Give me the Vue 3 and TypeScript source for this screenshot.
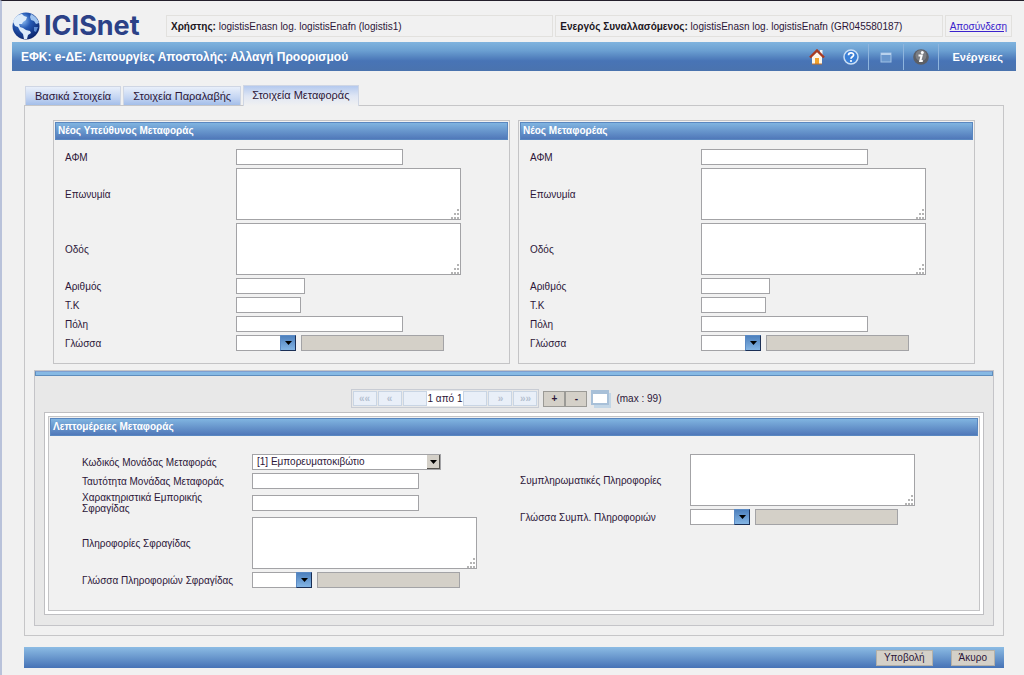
<script setup lang="ts">
import { reactive, ref } from 'vue'

type FieldKind = 'text' | 'area' | 'combo'
interface Field {
  key: string
  label: string
  kind: FieldKind
  size?: string
}
interface Party {
  id: string
  title: string
}

const tabs: string[] = ['Βασικά Στοιχεία', 'Στοιχεία Παραλαβής', 'Στοιχεία Μεταφοράς']
const activeTab = ref(2)

const parties: Party[] = [
  { id: 'arranger', title: 'Νέος Υπεύθυνος Μεταφοράς' },
  { id: 'carrier', title: 'Νέος Μεταφορέας' },
]

const partyFields: Field[] = [
  { key: 'vat', label: 'ΑΦΜ', kind: 'text' },
  { key: 'name', label: 'Επωνυμία', kind: 'area' },
  { key: 'street', label: 'Οδός', kind: 'area' },
  { key: 'number', label: 'Αριθμός', kind: 'text', size: 'small' },
  { key: 'zip', label: 'Τ.Κ', kind: 'text', size: 'smaller' },
  { key: 'city', label: 'Πόλη', kind: 'text' },
  { key: 'lang', label: 'Γλώσσα', kind: 'combo' },
]

const unitFields: Field[] = [
  { key: 'unitId', label: 'Ταυτότητα Μονάδας Μεταφοράς', kind: 'text' },
  { key: 'seal', label: 'Χαρακτηριστικά Εμπορικής Σφραγίδας', kind: 'text' },
  { key: 'sealInfo', label: 'Πληροφορίες Σφραγίδας', kind: 'area' },
  { key: 'sealLang', label: 'Γλώσσα Πληροφοριών Σφραγίδας', kind: 'combo' },
]

const extraFields: Field[] = [
  { key: 'extra', label: 'Συμπληρωματικές Πληροφορίες', kind: 'area' },
  { key: 'extraLang', label: 'Γλώσσα Συμπλ. Πληροφοριών', kind: 'combo' },
]

const values = reactive<Record<string, string>>({})
const unitCode = ref('1')
</script>

<template>
  <div class="page">
    <header class="top">
      <div class="logo">
        <svg class="globe" viewBox="0 0 28 28" aria-hidden="true">
          <defs>
            <radialGradient id="sea" cx="0.38" cy="0.3" r="0.75">
              <stop offset="0" stop-color="#8fc0f4" />
              <stop offset="0.4" stop-color="#2559b4" />
              <stop offset="1" stop-color="#0b2369" />
            </radialGradient>
          </defs>
          <circle cx="14" cy="14" r="13.5" fill="url(#sea)" />
          <path d="M1 10 C2 6 6 2 10 2 L12 4 L15 5 L14 8 L11 10 L10 12 L7 12 L8 15 L11 16 L14 18 L18 19 L19 21 L16 23 L15 27 L12 27 L11 22 L8 19 L6 15 L3 14 Z" fill="#dcebfa" />
          <path d="M19 2 C23 4 26 7 27 11 L24 12 L22 9 L19 8 L18 5 Z" fill="#9fc3ee" />
          <path d="M22 15 L26 15 L24 20 L22 19 Z" fill="#5c8bd2" />
        </svg>
        <span class="brand">ICISnet</span>
      </div>
      <div class="info user"><strong>Χρήστης:</strong> logistisEnasn log. logistisEnafn (logistis1)</div>
      <div class="info trader"><strong>Ενεργός Συναλλασόμενος:</strong> logistisEnasn log. logistisEnafn (GR045580187)</div>
      <div class="info out"><a href="#">Αποσύνδεση</a></div>
    </header>

    <div class="titlebar">
      <h1>ΕΦΚ: e-ΔΕ: Λειτουργίες Αποστολής: Αλλαγή Προορισμού</h1>
      <nav class="tools">
        <button type="button" class="tool" aria-label="Αρχική">
          <svg viewBox="0 0 16 16">
            <path d="M3 7 L8 3 L13 7 V15 H3 Z" fill="#fbf6ea" />
            <path d="M11 1 H13.500 V6 L11 5 Z" fill="#f4f4f4" />
            <path d="M1 8.500 L8 1.500 L15 8.500" fill="none" stroke="#a83a22" stroke-width="2.400" />
            <rect x="6" y="9" width="4" height="6" fill="#f0a22c" />
            <path d="M3 15 H13" stroke="#c4712b" />
          </svg>
        </button>
        <button type="button" class="tool" aria-label="Βοήθεια">
          <svg viewBox="0 0 16 16">
            <circle cx="8" cy="8" r="7" fill="#3b7fd6" stroke="#c9def5" stroke-width="1.500" />
            <path d="M5.500 6.300 C5.500 3.200 10.600 3.200 10.600 6 C10.600 7.800 8 7.800 8 9.800" fill="none" stroke="#fff" stroke-width="1.700" />
            <circle cx="8" cy="12" r="1.100" fill="#fff" />
          </svg>
        </button>
        <button type="button" class="tool split" aria-label="Παράθυρο">
          <svg viewBox="0 0 16 16">
            <rect x="3" y="4" width="10" height="9" fill="#6a97cd" stroke="#9fc0e4" />
            <path d="M3 5 H13" stroke="#b9d2ed" stroke-width="2" />
          </svg>
        </button>
        <button type="button" class="tool split" aria-label="Πληροφορίες">
          <svg viewBox="0 0 16 16">
            <circle cx="8" cy="8" r="7.800" fill="#5c5f66" />
            <circle cx="8" cy="6.500" r="5.500" fill="#7b7e84" />
            <circle cx="9.300" cy="3.500" r="1.500" fill="#fff" />
            <path d="M5.500 6.500 H8.700 L7.200 12 H9.800" fill="none" stroke="#fff" stroke-width="2" />
          </svg>
        </button>
        <button type="button" class="actions">Ενέργειες</button>
      </nav>
    </div>

    <main class="body">
      <div class="tabs" role="tablist">
        <button
          v-for="(tab, i) in tabs"
          :key="tab"
          type="button"
          role="tab"
          class="tab"
          :class="{ active: i === activeTab }"
          :aria-selected="i === activeTab"
          @click="activeTab = i"
        >{{ tab }}</button>
      </div>

      <form class="panel" @submit.prevent>
        <div class="parties">
          <section v-for="party in parties" :key="party.id" class="box">
            <h2>{{ party.title }}</h2>
            <div class="rows">
              <div v-for="f in partyFields" :key="f.key" class="row">
                <label :for="party.id + f.key">{{ f.label }}</label>
                <textarea v-if="f.kind === 'area'" :id="party.id + f.key" v-model="values[party.id + f.key]"></textarea>
                <input v-else-if="f.kind === 'text'" :id="party.id + f.key" v-model="values[party.id + f.key]" type="text" :class="f.size">
                <div v-else class="combo">
                  <input :id="party.id + f.key" v-model="values[party.id + f.key]" type="text" class="code">
                  <button type="button" class="drop" aria-label="Επιλογή"><svg viewBox="0 0 7 4"><path d="M0 0 H7 L3.500 4 Z" /></svg></button>
                  <input type="text" class="desc" disabled :aria-label="f.label">
                </div>
              </div>
            </div>
          </section>
        </div>

        <div class="repeat">
          <div class="strip"></div>
          <div class="pager">
            <div class="pages">
              <button type="button" disabled>««</button>
              <button type="button" disabled>«</button>
              <span class="cell"></span>
              <span class="count">1 από 1</span>
              <span class="cell"></span>
              <button type="button" disabled>»</button>
              <button type="button" disabled>»»</button>
            </div>
            <div class="edit">
              <button type="button">+</button>
              <button type="button">-</button>
            </div>
            <button type="button" class="listing" aria-label="Λίστα">
              <svg viewBox="0 0 20 18">
                <rect x="3" y="3" width="17" height="15" fill="#c3d6e6" />
                <rect x="1" y="1" width="16" height="13" fill="#fff" stroke="#a8c0d8" stroke-width="2" />
                <rect x="1" y="1" width="16" height="3" fill="#a8c0d8" />
              </svg>
            </button>
            <span class="max">(max : 99)</span>
          </div>

          <div class="frame">
            <section class="box details">
              <h2>Λεπτομέρειες Μεταφοράς</h2>
              <div class="columns">
                <div class="rows">
                  <div class="row">
                    <label for="unitCode">Κωδικός Μονάδας Μεταφοράς</label>
                    <div class="pick">
                      <select id="unitCode" v-model="unitCode">
                        <option value="1">[1] Εμπορευματοκιβώτιο</option>
                      </select>
                      <svg class="arrow" viewBox="0 0 13 14" aria-hidden="true">
                        <rect width="13" height="14" fill="#55534e" />
                        <rect width="12" height="13" fill="#d4d0c8" />
                        <path d="M3 5 H10 L6.500 9 Z" />
                      </svg>
                    </div>
                  </div>
                  <div v-for="f in unitFields" :key="f.key" class="row">
                    <label :for="f.key">{{ f.label }}</label>
                    <textarea v-if="f.kind === 'area'" :id="f.key" v-model="values[f.key]"></textarea>
                    <input v-else-if="f.kind === 'text'" :id="f.key" v-model="values[f.key]" type="text">
                    <div v-else class="combo">
                      <input :id="f.key" v-model="values[f.key]" type="text" class="code">
                      <button type="button" class="drop" aria-label="Επιλογή"><svg viewBox="0 0 7 4"><path d="M0 0 H7 L3.500 4 Z" /></svg></button>
                      <input type="text" class="desc" disabled :aria-label="f.label">
                    </div>
                  </div>
                </div>
                <div class="rows">
                  <div v-for="f in extraFields" :key="f.key" class="row">
                    <label :for="f.key">{{ f.label }}</label>
                    <textarea v-if="f.kind === 'area'" :id="f.key" v-model="values[f.key]"></textarea>
                    <div v-else class="combo">
                      <input :id="f.key" v-model="values[f.key]" type="text" class="code">
                      <button type="button" class="drop" aria-label="Επιλογή"><svg viewBox="0 0 7 4"><path d="M0 0 H7 L3.500 4 Z" /></svg></button>
                      <input type="text" class="desc" disabled :aria-label="f.label">
                    </div>
                  </div>
                </div>
              </div>
            </section>
          </div>
        </div>
      </form>

      <footer class="footer">
        <button type="button">Υποβολή</button>
        <button type="button">Άκυρο</button>
      </footer>
    </main>
  </div>
</template>

<style>
body {
  background: #f1f1f1;
}
</style>

<style scoped>
.page {
  box-sizing: border-box;
  min-height: 100vh;
  padding: 0 8px 8px 10px;
  border-top: 1px solid #231f2b;
  border-left: 2px solid #b9c2da;
  background: #f1f1f1;
  color: #2c1638;
  font-family: "Liberation Sans", Arial, sans-serif;
  font-size: 10px;
  line-height: 12px;
}
.page *,
.page *::before {
  box-sizing: border-box;
}
button,
input,
select,
textarea {
  margin: 0;
  padding: 0;
  border-radius: 0;
  color: inherit;
  font: inherit;
}
svg {
  display: block;
}

/* Header */
.top {
  display: flex;
  align-items: center;
  gap: 2px;
  height: 41px;
  padding: 9px 4px 0 0;
}
.logo {
  display: flex;
  align-items: center;
  gap: 4px;
  width: 152px;
}
.globe {
  width: 28px;
  height: 28px;
}
.brand {
  color: #2b4187;
  font-family: Inter, sans-serif;
  font-size: 27px;
  font-weight: 700;
  line-height: 28px;
}
.info {
  height: 22px;
  padding: 0 4px;
  border: 1px solid #e2e1de;
  line-height: 21px;
  white-space: nowrap;
}
.info strong {
  color: #1c1622;
}
.user,
.trader {
  flex: 1 1 0;
}
.info a {
  color: #3a22cc;
}

/* Title bar */
.titlebar {
  display: flex;
  align-items: center;
  justify-content: space-between;
  height: 29px;
  padding: 0 0 0 9px;
  background: linear-gradient(#80b4de, #6b9fd1 30%, #4874b6 65%, #4a73ae);
  color: #fff;
}
h1 {
  margin: 0;
  font-size: 12px;
  font-weight: 700;
}
.tools {
  display: flex;
  align-items: center;
}
.tool {
  display: flex;
  align-items: center;
  justify-content: center;
  width: 34px;
  height: 26px;
  border: 0;
  background: none;
}
.tool svg {
  width: 16px;
  height: 16px;
}
.split {
  width: 35px;
  border-left: 1px solid #8fb5dd;
}
.actions {
  height: 26px;
  padding: 0 13px;
  border: 0;
  border-left: 1px solid #8fb5dd;
  background: none;
  font-size: 11px;
  font-weight: 700;
}

/* Tabs and main panel */
.body {
  padding: 14px 12px 0;
}
.tabs {
  display: flex;
  align-items: flex-end;
  gap: 2px;
  padding-left: 1px;
}
.tab {
  height: 19px;
  padding: 0 9px;
  border: 1px solid #cfd6e4;
  border-bottom: 0;
  background: linear-gradient(#e9effa, #c3d4f2 60%, #a3bee9);
  font-size: 11px;
}
.tab.active {
  position: relative;
  height: 21px;
  margin-bottom: -1px;
  padding: 0 8px 2px;
  background: linear-gradient(#b4c9ee, #dfe6f4 50%, #f1f1f1);
}
.panel {
  padding: 14px 9px 9px;
  border: 1px solid #c6c6c8;
}
.parties {
  display: grid;
  grid-template-columns: 1fr 1fr;
  gap: 8px;
  padding: 0 19px;
}
.box {
  padding: 1px;
  border: 1px solid #c4c4c6;
}
h2 {
  height: 18px;
  margin: 0;
  padding-left: 2px;
  border: 1px solid #5987c0;
  background: linear-gradient(#80b4e0, #5078b9);
  color: #fff;
  font-size: 10px;
  font-weight: 700;
  line-height: 16px;
}
.rows {
  display: flex;
  flex-direction: column;
  gap: 3px;
}
.parties .rows {
  padding: 9px 10px 11px;
}
.row {
  display: grid;
  grid-template-columns: 171px 1fr;
  align-items: center;
}
.row label {
  padding-right: 16px;
  line-height: 11px;
}
.row input {
  width: 167px;
  height: 16px;
  border: 1px solid #a3a3a6;
  background: #fff;
}
.row .small {
  width: 69px;
}
.row .smaller {
  width: 65px;
}
textarea {
  width: 225px;
  height: 52px;
  border: 1px solid #a3a3a6;
  background: #fff;
}
textarea::-webkit-resizer {
  background: url("data:image/svg+xml,%3Csvg xmlns='http://www.w3.org/2000/svg' width='10' height='10'%3E%3Cpath d='M7 1h2M4 5h2M7 5h2M1 9h2M4 9h2M7 9h2' stroke='%23b4b4b4' stroke-width='2'/%3E%3C/svg%3E") right bottom no-repeat;
}
.combo {
  display: flex;
}
.row .code {
  width: 44px;
  border-right: 0;
}
.drop {
  display: flex;
  align-items: center;
  justify-content: center;
  width: 16px;
  height: 16px;
  border: 1px solid #5b8ac4;
  border-right-color: #1b2f55;
  border-bottom-color: #1b2f55;
  background: linear-gradient(#4d80bd, #84b5e4);
}
.drop svg {
  width: 7px;
  height: 4px;
}
.row .desc {
  width: 143px;
  margin-left: 5px;
  background: #d4d0c8;
}

/* Repeating transport details */
.repeat {
  margin-top: 6px;
  padding: 0 9px 10px;
  border: 1px solid #c4c4c8;
  background: #e8e8e8;
}
.strip {
  height: 5px;
  margin: 0 -9px;
  border: 1px solid #5e8dbd;
  border-top-color: #7f9fd0;
  background: #86b9e4;
}
.pager {
  display: flex;
  align-items: center;
  justify-content: center;
  gap: 4px;
  height: 36px;
  padding: 9px 16px 0 0;
}
.pages {
  display: flex;
  gap: 1px;
  height: 19px;
  padding: 1px;
  border: 1px solid #c8ccd4;
}
.pages button,
.cell {
  width: 24px;
  height: 15px;
  border: 1px solid #c9d5e4;
  background: #e9eff8;
  color: #b4c0d0;
  font-weight: 700;
  line-height: 13px;
}
.count {
  padding: 0 1px;
  margin: 0 -1px;
  background: #fff;
  line-height: 15px;
}
.edit {
  display: flex;
}
.edit button {
  width: 22px;
  height: 16px;
  border: 1px solid #9b9a96;
  background: #d4d0c8;
  font-weight: 700;
  line-height: 12px;
}
.listing {
  border: 0;
  background: none;
}
.listing svg {
  width: 20px;
  height: 18px;
}
.max {
  padding-left: 1px;
}
.frame {
  padding: 3px;
  border: 1px solid #bfbfc2;
  background: #fff;
}
.details {
  background: #f1f1f1;
}
.columns {
  display: grid;
  grid-template-columns: 438px 1fr;
  padding: 18px 0 21px 32px;
}
.details .row {
  grid-template-columns: 170px 1fr;
}
.pick {
  position: relative;
  width: 189px;
}
.pick select {
  display: block;
  width: 100%;
  height: 16px;
  padding: 0 16px 0 4px;
  border: 1px solid #a3a3a6;
  background: #fff;
  appearance: none;
}
.arrow {
  position: absolute;
  top: 1px;
  right: 1px;
  width: 13px;
  height: 14px;
  pointer-events: none;
}

/* Footer */
.footer {
  display: flex;
  align-items: center;
  justify-content: flex-end;
  gap: 18px;
  height: 21px;
  margin-top: 11px;
  padding-right: 9px;
  background: linear-gradient(#8cbce4, #4672b6);
}
.footer button {
  height: 16px;
  padding: 0 7px;
  border: 1px solid #b4b0a8;
  background: #d4d0c8;
  line-height: 14px;
}
</style>
